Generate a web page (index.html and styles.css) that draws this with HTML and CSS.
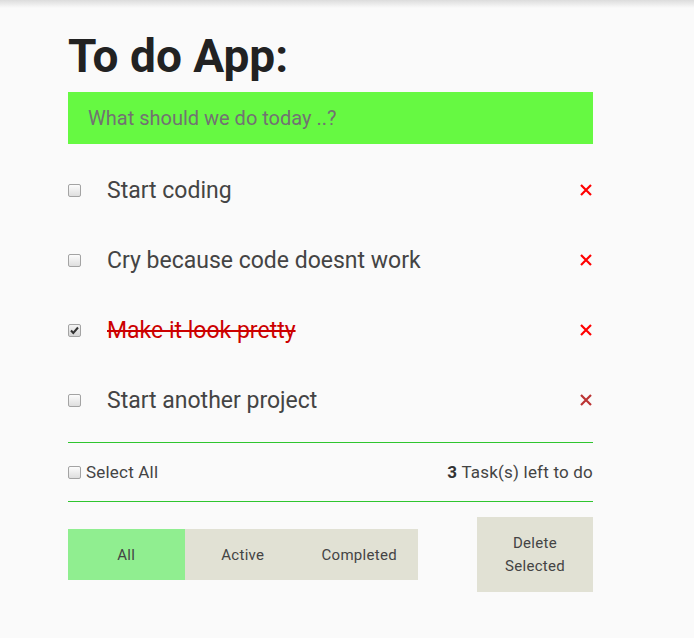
FILE: index.html
```html
<!DOCTYPE html>
<html>
<head>
<meta charset="utf-8">
<link rel="stylesheet" href="styles.css">
</head>
<body>
<div class="shade"></div>
<main class="app">
  <h1 class="title">To do App:</h1>
  <input class="new-todo" type="text" placeholder="What should we do today ..?">
  <ul class="list">
    <li class="item"><input type="checkbox" class="check"><span class="label">Start coding</span><span class="del"><svg width="12" height="12" viewBox="0 0 12 12"><path d="M1 1L11 11M11 1L1 11" stroke="currentColor" stroke-width="2.2"/></svg></span></li>
    <li class="item"><input type="checkbox" class="check"><span class="label">Cry because code doesnt work</span><span class="del"><svg width="12" height="12" viewBox="0 0 12 12"><path d="M1 1L11 11M11 1L1 11" stroke="currentColor" stroke-width="2.2"/></svg></span></li>
    <li class="item done"><input type="checkbox" class="check" checked><span class="label">Make it look pretty</span><span class="del"><svg width="12" height="12" viewBox="0 0 12 12"><path d="M1 1L11 11M11 1L1 11" stroke="currentColor" stroke-width="2.2"/></svg></span></li>
    <li class="item"><input type="checkbox" class="check"><span class="label">Start another project</span><span class="del hover"><svg width="12" height="12" viewBox="0 0 12 12"><path d="M1 1L11 11M11 1L1 11" stroke="currentColor" stroke-width="2.2"/></svg></span></li>
  </ul>
  <div class="footer">
    <label class="select-all"><input type="checkbox" class="check"> Select All</label>
    <span class="count"><b>3</b> Task(s) left to do</span>
  </div>
  <div class="actions">
    <div class="filters">
      <button class="filter active">All</button>
      <button class="filter">Active</button>
      <button class="filter">Completed</button>
    </div>
    <button class="delete">Delete<br>Selected</button>
  </div>
</main>
</body>
</html>
```
FILE: styles.css
```css
html, body {
  margin: 0;
  padding: 0;
  background: #fafafa;
  font-family: Roboto, "Liberation Sans", sans-serif;
  color: #444;
}
.shade {
  position: absolute;
  top: 0;
  left: 0;
  right: 0;
  height: 8px;
  background: linear-gradient(#dcdcdc, rgba(250,250,250,0));
}
.app {
  width: 525px;
  margin-left: 68px;
  padding-top: 28px;
}
.title {
  margin: 0;
  font-size: 46px;
  font-weight: 700;
  color: #222;
  line-height: 56px;
  height: 64px;
}
.new-todo {
  display: block;
  box-sizing: border-box;
  width: 100%;
  height: 52px;
  border: none;
  outline: none;
  background: #66f942;
  padding: 0 20px;
  font-family: Roboto, "Liberation Sans", sans-serif;
  font-size: 20px;
  color: #444;
}
.new-todo::placeholder {
  color: #727272;
}
.list {
  list-style: none;
  margin: 0;
  padding: 11px 0 7px;
}
.item {
  display: flex;
  align-items: center;
  height: 70px;
}
.check {
  appearance: none;
  -webkit-appearance: none;
  box-sizing: border-box;
  width: 13px;
  height: 13px;
  margin: 0;
  border: 1px solid #a3a3a3;
  border-radius: 2px;
  background: linear-gradient(#fcfcfc, #dedede);
}
.check:checked {
  background-image: url("data:image/svg+xml;utf8,<svg xmlns='http://www.w3.org/2000/svg' width='11' height='11' viewBox='0 0 11 11'><path d='M2 5.5L4.3 8L9 2.5' fill='none' stroke='%23333' stroke-width='2'/></svg>"), linear-gradient(#f4f4f4, #d4d4d4);
  background-repeat: no-repeat;
  background-position: center;
}
.label {
  flex: 1;
  margin-left: 26px;
  font-size: 23px;
  color: #444;
}
.done .label {
  color: #c00;
  text-decoration: line-through;
}
.del {
  display: flex;
  color: #f00;
  margin-right: 1px;
}
.del.hover {
  color: #b33;
}
.footer {
  display: flex;
  justify-content: space-between;
  align-items: center;
  height: 58px;
  border-top: 1px solid #2fc52f;
  border-bottom: 1px solid #2fc52f;
  font-size: 17px;
  letter-spacing: 0.2px;
}
.select-all {
  display: flex;
  align-items: center;
  gap: 5px;
}
.count b {
  color: #333;
}
.actions {
  display: flex;
  justify-content: space-between;
  align-items: center;
  margin-top: 15px;
}
.filters {
  display: flex;
}
button {
  font-family: Roboto, "Liberation Sans", sans-serif;
  font-size: 15px;
  letter-spacing: 0.3px;
  color: #444;
  border: none;
  background: #e1e1d4;
  padding: 0;
}
.filter {
  width: 116.5px;
  height: 51px;
}
.filter.active {
  background: #90ee90;
}
.delete {
  width: 116px;
  height: 75px;
  line-height: 23px;
}
```
